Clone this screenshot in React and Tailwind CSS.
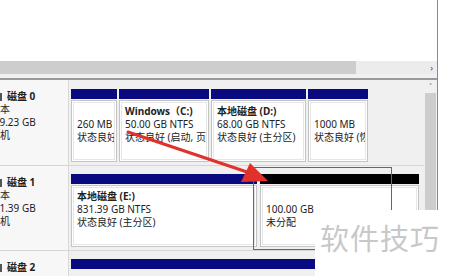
import React from "react";

const font = { fontFamily: '"Noto Sans", "Noto Sans CJK SC", sans-serif' };

function Part({ w, head = "bg-[#0a0a80]", lines, bold }) {
  return (
    <div className={`flex flex-col ${w}`}>
      <div className={`h-[10px] ${head}`} />
      <div className="flex-1 border border-[#c4c4c4] bg-white p-[1px] mt-[1px]">
        <div className="h-full border border-[#e6e6e6] px-[3px] pt-[2px] text-[10px] text-[#222] whitespace-nowrap overflow-hidden">
          {lines.map((l, i) => (
            <div key={i} className={`h-[13px] leading-[13px] ${i === 0 && bold ? "font-bold" : ""}`}>{l}</div>
          ))}
        </div>
      </div>
    </div>
  );
}

function Label({ n }) {
  return (
    <div className="w-[69px] shrink-0 bg-[#f7f7f7] border-r border-[#d8d8d8] overflow-hidden text-[10px] text-[#222] pt-[10px]">
      <div className="h-[13px] leading-[13px] flex items-center gap-[5px] -ml-[2px]">
        <span className="w-[4px] h-[8px] bg-[#555] inline-block" />
        <span className="font-bold">磁盘 {n}</span>
      </div>
      <div className="h-[13px] leading-[13px] -ml-[10px]">基本</div>
      <div className="h-[13px] leading-[13px] -ml-[12px]">{n === 0 ? "119.23 GB" : "931.39 GB"}</div>
      <div className="h-[13px] leading-[13px] -ml-[10px]">联机</div>
    </div>
  );
}

export default function App() {
  return (
    <div className="relative w-[450px] h-[276px] overflow-hidden bg-white flex" style={font}>
      <div className="w-[437px] flex flex-col shrink-0">
        <div className="h-[61px] bg-white" />
        <div className="h-[13px] bg-[#ececec] flex items-center">
          <div className="w-[356px] h-full bg-[#cdcdcd]" />
          <div className="flex-1 flex justify-end pr-[4px] text-[9px] text-[#444] leading-none">›</div>
        </div>
        <div className="h-[4px] bg-[#f0f0f0]" />
        <div className="h-[2px] bg-[#9a9a9a]" />
        <div className="flex-1 flex bg-[#f0f0f0]">
          <div className="flex-1 flex flex-col">
            <div className="h-[86px] flex border-b border-[#d6d6d6]">
              <Label n={0} />
              <div className="flex-1 pl-[2px] pt-[9px] pb-[3px] flex gap-[2px]">
                <Part w="w-[46px]" lines={["", "260 MB", "状态良好"]} />
                <Part w="w-[90px]" bold lines={["Windows（C:)", "50.00 GB NTFS", "状态良好 (启动, 页面文件)"]} />
                <Part w="w-[95px]" bold lines={["本地磁盘  (D:)", "68.00 GB NTFS", "状态良好 (主分区)"]} />
                <Part w="w-[60px]" lines={["", "1000 MB", "状态良好 (恢复分区)"]} />
              </div>
            </div>
            <div className="h-[85px] flex border-b border-[#d6d6d6]">
              <Label n={1} />
              <div className="flex-1 pl-[2px] pt-[8px] pb-[3px] flex gap-[3px]">
                <Part w="w-[186px]" bold lines={["本地磁盘  (E:)", "831.39 GB NTFS", "状态良好 (主分区)"]} />
                <Part w="w-[159px]" head="bg-black" lines={["", "100.00 GB", "未分配"]} />
              </div>
            </div>
            <div className="flex-1 flex">
              <div className="w-[69px] shrink-0 bg-[#f7f7f7] border-r border-[#d8d8d8] overflow-hidden text-[10px] text-[#222] pt-[10px]">
                <div className="h-[13px] leading-[13px] flex items-center gap-[5px] -ml-[2px]">
                  <span className="w-[4px] h-[8px] bg-[#555] inline-block" />
                  <span className="font-bold">磁盘 2</span>
                </div>
              </div>
              <div className="flex-1 pl-[2px] pt-[8px]">
                <div className="h-[10px] w-[348px] bg-[#0a0a80]" />
              </div>
            </div>
          </div>
          <div className="w-[13px] bg-[#f0f0f0] flex flex-col">
            <div className="h-[13px] flex items-center justify-center text-[9px] text-[#444] leading-none">˄</div>
            <div className="flex-1 bg-[#cdcdcd] mx-[1px]" />
          </div>
        </div>
      </div>
      <div className="w-[1px] bg-[#8a8a8a]" />
      <div className="flex-1 bg-white" />

      <svg className="absolute left-0 top-0" width="450" height="276" viewBox="0 0 450 276">
        <rect x="253.5" y="167.5" width="138" height="82" fill="none" stroke="#cc3b3b" strokeWidth="1" />
        <line x1="128" y1="132" x2="250" y2="173" stroke="#e0312b" strokeWidth="3" strokeLinecap="round" />
        <polygon points="268,181 241,182 250,163" fill="#e0312b" />
      </svg>

      <div className="absolute left-[315px] top-[210px] w-[135px] h-[66px] bg-white flex items-start pl-[5px] pt-[11px]">
        <span className="text-[29px] leading-[32px] text-[#c8c8c8] tracking-[1px]" style={{ fontFamily: '"Noto Sans CJK SC", sans-serif' }}>软件技巧</span>
      </div>
    </div>
  );
}
